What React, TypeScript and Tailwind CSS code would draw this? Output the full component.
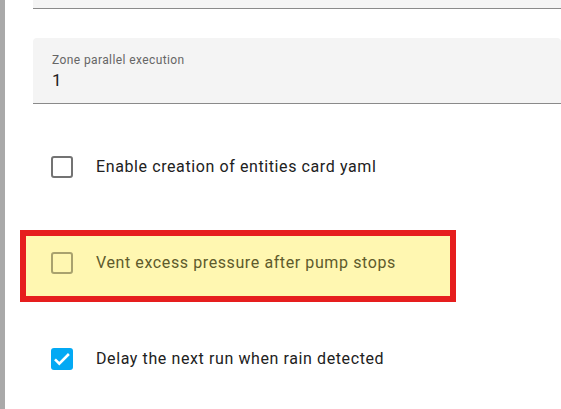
import React from 'react';

const Check = () => (
  <svg viewBox="0 0 22 22" className="absolute inset-0 w-[22px] h-[22px]" fill="none" stroke="white" strokeWidth={2.6}>
    <path d="M4 11.3l4.3 4.3 9.6-9.6" />
  </svg>
);

const Row = ({ label, checked, mark }: { label: string; checked?: boolean; mark?: boolean }) => (
  <div className="relative flex items-center h-[24px] pl-[18px]">
    {mark && (
      <div className="absolute left-[-13px] top-[-21px] w-[436px] h-[72px] border-[6px] border-[#e61e1e] bg-[#fff7b1]" />
    )}
    <div
      className={
        'relative w-[22px] h-[22px] rounded-[3px] ' +
        (checked
          ? 'bg-[#03a9f4]'
          : mark
          ? 'border-[2.5px] border-[#a9a26e]'
          : 'border-[2.5px] border-[#737373]')
      }
    >
      {checked && <Check />}
    </div>
    <span
      className={
        'relative ml-[23px] text-[16px] tracking-[0.6px] ' + (mark ? 'text-[#5e5b2c]' : 'text-[#212121]')
      }
    >
      {label}
    </span>
  </div>
);

export default function App() {
  return (
    <div className="flex h-[409px] w-[561px] overflow-hidden bg-white" style={{ fontFamily: 'Roboto, sans-serif' }}>
      <div className="w-[5px] bg-[#a9a9a9] shrink-0" />
      <div className="flex-1 pl-[28px] flex flex-col">
        <div className="h-[9px] bg-[#f4f4f4] border-b border-[#8a8a8a]" />
        <div className="mt-[29px] h-[66px] bg-[#f4f4f4] rounded-t-[4px] border-b border-[#8a8a8a] px-[19px] pt-[14px]">
          <div className="text-[12px] leading-[16px] tracking-[0.4px] text-[#666666]">Zone parallel execution</div>
          <div className="text-[17px] leading-[22px] text-[#212121] mt-[1px]">1</div>
        </div>
        <div className="mt-[51px]">
          <Row label="Enable creation of entities card yaml" />
        </div>
        <div className="mt-[72px]">
          <Row label="Vent excess pressure after pump stops" mark />
        </div>
        <div className="mt-[72px]">
          <Row label="Delay the next run when rain detected" checked />
        </div>
      </div>
    </div>
  );
}
